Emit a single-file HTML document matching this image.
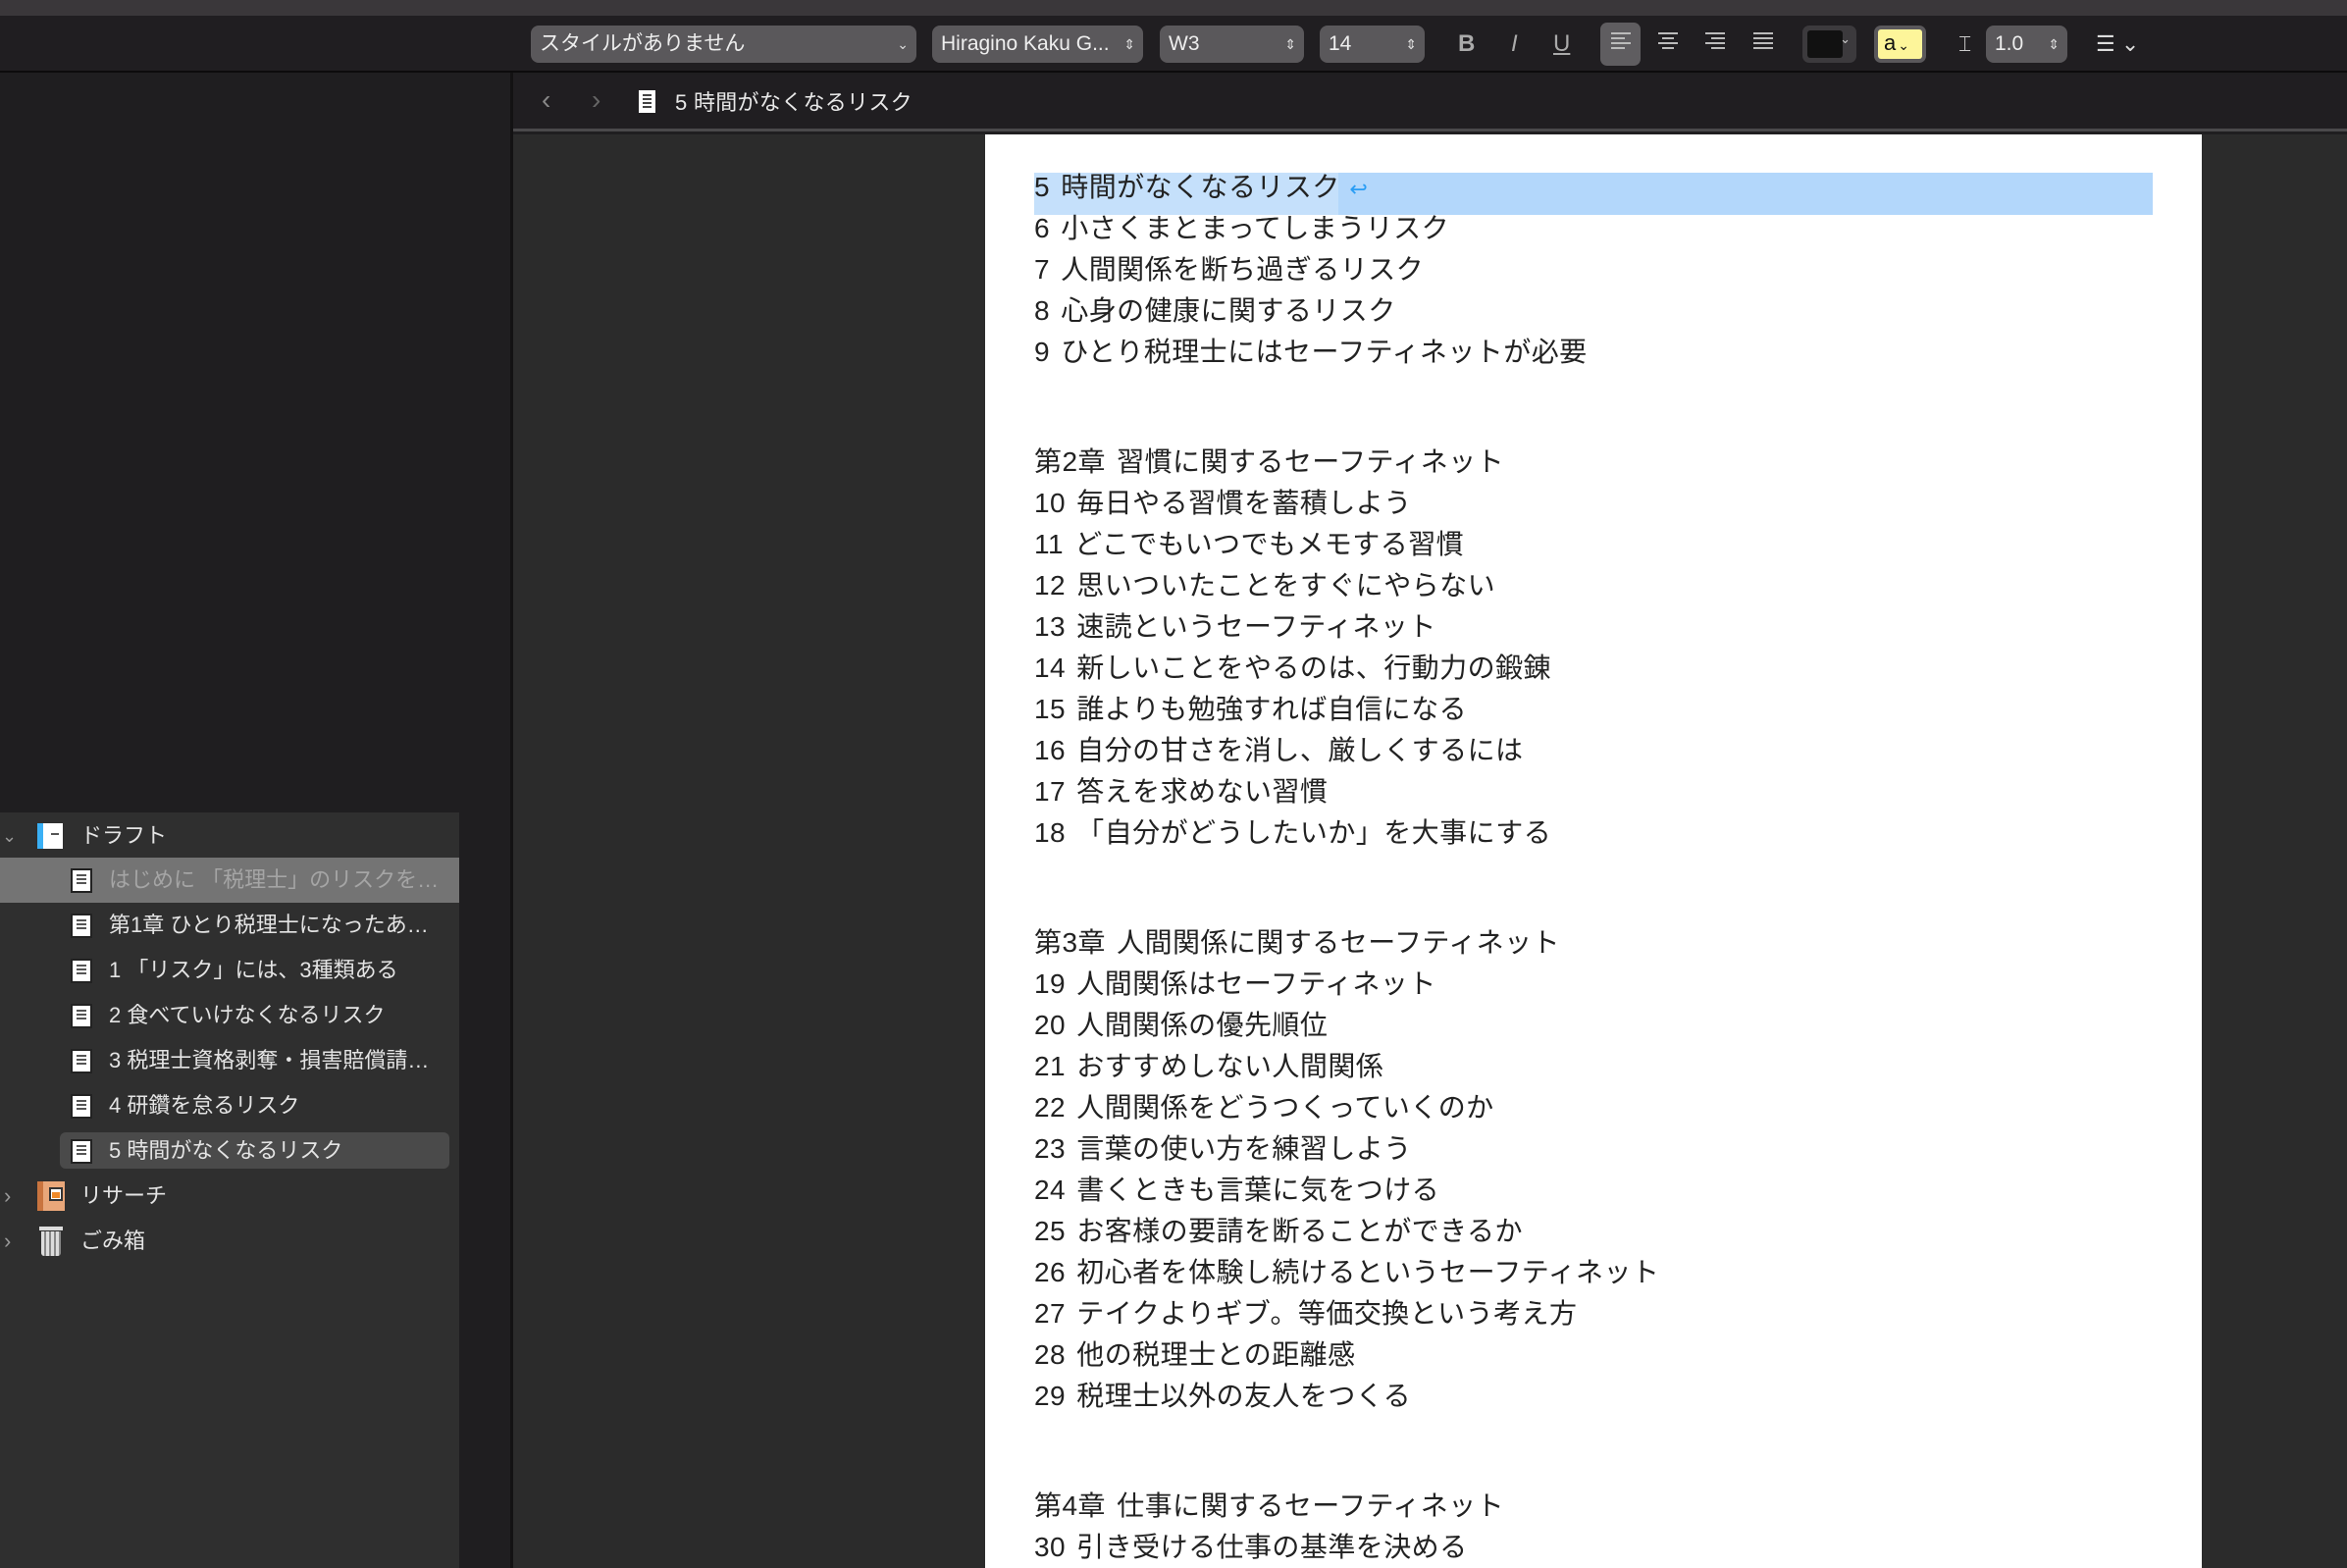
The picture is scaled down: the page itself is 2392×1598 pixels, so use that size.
<!DOCTYPE html>
<html><head><meta charset="utf-8"><style>
*{margin:0;padding:0;box-sizing:border-box}
body{width:2392px;height:1598px;overflow:hidden;background:#1f1e20;font-family:"Liberation Sans","Noto Sans CJK JP",sans-serif;position:relative}
.abs{position:absolute}
#title{left:0;top:0;width:2392px;height:16px;background:#3a373a}
#tb{left:0;top:16px;width:2392px;height:58px;background:#201e21;border-bottom:2px solid #0c0b0c}
#nav{left:523px;top:76px;width:1869px;height:58px;background:#201e21;border-bottom:3px solid #4a494b}
#side{left:0;top:16px;width:523px;height:1582px;background:#1f1e20;border-right:3px solid #131213}
#outline{left:0;top:828px;width:468px;height:770px;background:#2f2f2f}
#editor{left:523px;top:137px;width:1869px;height:1461px;background:#2b2b2b}
#page{left:1004px;top:137px;width:1240px;height:1461px;background:#fff}
.pop{position:absolute;top:26px;height:38px;background:#5a585b;border-radius:8px;color:#eee;font-size:21px;line-height:38px;padding-left:9px}
.pop .ar{position:absolute;right:8px;top:0;font-size:14px;color:#ddd}
.tbi{position:absolute;top:26px;color:#aaa;font-size:24px;line-height:38px}
.line{position:absolute;left:1054px;font-size:28px;color:#222;height:42px;line-height:42px;white-space:nowrap;letter-spacing:0.45px;word-spacing:3px;font-family:"Liberation Sans","Noto Sans CJK JP",sans-serif}
.row{position:absolute;left:0;width:468px;height:46px;font-size:22px;color:#e4e4e4;line-height:46px;white-space:nowrap}
.doc{position:absolute;left:72px;top:11px;width:22px;height:25px;background:#fff;border:2px solid #222}
.doc::after{content:"";position:absolute;left:4px;top:4px;width:10px;height:12px;background:repeating-linear-gradient(#555 0 2px,transparent 2px 4px)}
.al{position:absolute;top:33px;width:20px;height:22px}
.al i{display:block;height:2px;background:#bbb;margin-bottom:3px}
</style></head><body>
<div id="title" class="abs"></div>
<div id="side" class="abs"></div>
<div id="tb" class="abs"></div>
<div id="nav" class="abs"></div>
<div id="editor" class="abs"></div>
<div id="page" class="abs"></div>

<div class="pop" style="left:541px;width:393px">スタイルがありません<span class="ar">⌄</span></div>
<div class="pop" style="left:950px;width:215px">Hiragino Kaku G...<span class="ar">⇕</span></div>
<div class="pop" style="left:1182px;width:147px">W3<span class="ar">⇕</span></div>
<div class="pop" style="left:1345px;width:107px">14<span class="ar">⇕</span></div>
<div class="tbi" style="left:1486px;font-weight:bold">B</div>
<div class="tbi" style="left:1540px;font-style:italic">I</div>
<div class="tbi" style="left:1583px;text-decoration:underline">U</div>
<div class="abs" style="left:1631px;top:23px;width:41px;height:44px;background:#5f5d60;border-radius:7px"></div>
<div class="al" style="left:1642px"><i></i><i style="width:70%"></i><i></i><i style="width:70%"></i></div>
<div class="al" style="left:1690px"><i></i><i style="width:60%;margin-left:20%"></i><i></i><i style="width:60%;margin-left:20%"></i></div>
<div class="al" style="left:1738px"><i></i><i style="width:70%;margin-left:30%"></i><i></i><i style="width:70%;margin-left:30%"></i></div>
<div class="al" style="left:1787px"><i></i><i></i><i></i><i></i></div>
<div class="abs" style="left:1837px;top:26px;width:55px;height:38px;background:#3c3a3d;border-radius:7px"><div style="position:absolute;left:5px;top:5px;width:36px;height:28px;background:#111;border-radius:3px"></div><span style="position:absolute;right:6px;top:6px;color:#ccc;font-size:13px">⌄</span></div>
<div class="abs" style="left:1910px;top:26px;width:53px;height:38px;background:#5a585b;border-radius:7px"><div style="position:absolute;left:4px;top:4px;width:45px;height:30px;background:#fdf59a;border-radius:3px;color:#111;font-size:22px;line-height:28px;padding-left:6px">a<span style="font-size:14px;margin-left:2px">⌄</span></div></div>
<div class="tbi" style="left:1996px;font-size:22px;color:#ccc">⌶</div>
<div class="pop" style="left:2024px;width:83px">1.0<span class="ar">⇕</span></div>
<div class="tbi" style="left:2136px;font-size:22px;color:#ddd">☰ ⌄</div>

<div class="abs" style="left:552px;top:86px;color:#888;font-size:28px">‹</div>
<div class="abs" style="left:603px;top:86px;color:#666;font-size:28px">›</div>
<div class="abs" style="left:651px;top:92px;width:17px;height:23px;background:#fff"><div style="position:absolute;left:4px;top:4px;width:9px;height:14px;background:repeating-linear-gradient(#444 0 2px,transparent 2px 4px)"></div></div>
<div class="abs" style="left:688px;top:89px;color:#e8e8e8;font-size:22px;line-height:32px;letter-spacing:0.3px">5 時間がなくなるリスク</div>

<div id="outline" class="abs"></div>
<div class="row" style="top:829px"><span style="position:absolute;left:2px;color:#999;font-size:18px">⌄</span><div style="position:absolute;left:38px;top:10px;width:26px;height:26px;background:#fff;border-left:6px solid #3ab0f5"><div style="position:absolute;left:8px;top:10px;width:8px;height:2px;background:#555"></div></div><span style="position:absolute;left:82px">ドラフト</span></div>
<div class="row" style="top:874px;background:#747474;color:#a5a5a5"><div class="doc"></div><span style="position:absolute;left:111px">はじめに 「税理士」のリスクを…</span></div>
<div class="row" style="top:920px"><div class="doc"></div><span style="position:absolute;left:111px">第1章 ひとり税理士になったあ…</span></div>
<div class="row" style="top:966px"><div class="doc"></div><span style="position:absolute;left:111px">1 「リスク」には、3種類ある</span></div>
<div class="row" style="top:1012px"><div class="doc"></div><span style="position:absolute;left:111px">2 食べていけなくなるリスク</span></div>
<div class="row" style="top:1058px"><div class="doc"></div><span style="position:absolute;left:111px">3 税理士資格剥奪・損害賠償請…</span></div>
<div class="row" style="top:1104px"><div class="doc"></div><span style="position:absolute;left:111px">4 研鑽を怠るリスク</span></div>
<div class="abs" style="left:61px;top:1154px;width:397px;height:37px;background:#4a4a4a;border-radius:6px"></div>
<div class="row" style="top:1150px"><div class="doc"></div><span style="position:absolute;left:111px">5 時間がなくなるリスク</span></div>
<div class="row" style="top:1196px"><span style="position:absolute;left:4px;color:#999">›</span><div style="position:absolute;left:38px;top:8px;width:28px;height:30px;background:#e9a77a;border-left:6px solid #c9743f"><div style="position:absolute;left:6px;top:6px;width:14px;height:14px;background:#fff;border:2px solid #333"><div style="position:absolute;left:1px;top:3px;width:8px;height:6px;background:#f08a2a"></div></div></div><span style="position:absolute;left:82px">リサーチ</span></div>
<div class="row" style="top:1242px"><span style="position:absolute;left:4px;color:#999">›</span><div style="position:absolute;left:40px;top:8px;width:24px;height:4px;background:#ddd"></div><div style="position:absolute;left:42px;top:13px;width:20px;height:25px;background:repeating-linear-gradient(90deg,#ddd 0 3px,#888 3px 5px);border-radius:0 0 3px 3px"></div><span style="position:absolute;left:82px">ごみ箱</span></div>

<div class="abs" style="left:1054px;top:176px;width:1140px;height:43px;background:#b3d7fb"></div>
<div class="abs" style="left:1054px;top:176px;width:310px;height:43px;background:#c5e0fb"></div>
<div class="line" style="top:170px">5 時間がなくなるリスク<span style="color:#2a9df4;font-size:22px"> ↩</span></div>
<div class="line" style="top:212px">6 小さくまとまってしまうリスク</div>
<div class="line" style="top:254px">7 人間関係を断ち過ぎるリスク</div>
<div class="line" style="top:296px">8 心身の健康に関するリスク</div>
<div class="line" style="top:338px">9 ひとり税理士にはセーフティネットが必要</div>
<div class="line" style="top:450px">第2章 習慣に関するセーフティネット</div>
<div class="line" style="top:492px">10 毎日やる習慣を蓄積しよう</div>
<div class="line" style="top:534px">11 どこでもいつでもメモする習慣</div>
<div class="line" style="top:576px">12 思いついたことをすぐにやらない</div>
<div class="line" style="top:618px">13 速読というセーフティネット</div>
<div class="line" style="top:660px">14 新しいことをやるのは、行動力の鍛錬</div>
<div class="line" style="top:702px">15 誰よりも勉強すれば自信になる</div>
<div class="line" style="top:744px">16 自分の甘さを消し、厳しくするには</div>
<div class="line" style="top:786px">17 答えを求めない習慣</div>
<div class="line" style="top:828px">18 「自分がどうしたいか」を大事にする</div>
<div class="line" style="top:940px">第3章 人間関係に関するセーフティネット</div>
<div class="line" style="top:982px">19 人間関係はセーフティネット</div>
<div class="line" style="top:1024px">20 人間関係の優先順位</div>
<div class="line" style="top:1066px">21 おすすめしない人間関係</div>
<div class="line" style="top:1108px">22 人間関係をどうつくっていくのか</div>
<div class="line" style="top:1150px">23 言葉の使い方を練習しよう</div>
<div class="line" style="top:1192px">24 書くときも言葉に気をつける</div>
<div class="line" style="top:1234px">25 お客様の要請を断ることができるか</div>
<div class="line" style="top:1276px">26 初心者を体験し続けるというセーフティネット</div>
<div class="line" style="top:1318px">27 テイクよりギブ。等価交換という考え方</div>
<div class="line" style="top:1360px">28 他の税理士との距離感</div>
<div class="line" style="top:1402px">29 税理士以外の友人をつくる</div>
<div class="line" style="top:1514px">第4章 仕事に関するセーフティネット</div>
<div class="line" style="top:1556px">30 引き受ける仕事の基準を決める</div>
</body></html>
